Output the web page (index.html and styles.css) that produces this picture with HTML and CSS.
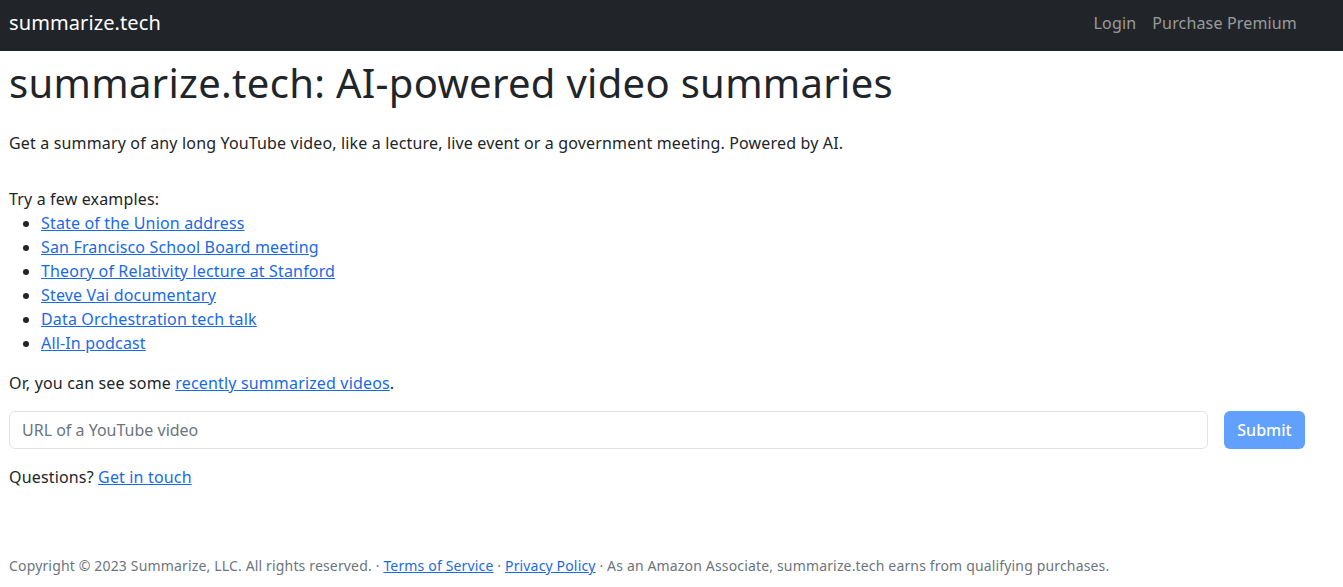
FILE: index.html
```html
<!DOCTYPE html>
<html lang="en">
  <head>
    <meta charset="UTF-8" />
    <meta name="viewport" content="width=device-width, initial-scale=1.0" />
    <title>summarize.tech: AI-powered video summaries</title>
    <link rel="stylesheet" href="styles.css">
  </head>
  <body>
    <nav class="navbar">
      <div class="container navbar-inner">
        <a class="navbar-brand" href="#">summarize.tech</a>
        <div class="navbar-nav">
          <a class="nav-link" href="#">Login</a>
          <a class="nav-link" href="#">Purchase Premium</a>
        </div>
      </div>
    </nav>

    <main class="container">
      <h1>summarize.tech: AI-powered video summaries</h1>
      <p class="intro">
        Get a summary of any long YouTube video, like a lecture, live event or a government meeting. Powered by AI.
      </p>

      <div class="examples">
        Try a few examples:
        <ul>
          <li><a href="#">State of the Union address</a></li>
          <li><a href="#">San Francisco School Board meeting</a></li>
          <li><a href="#">Theory of Relativity lecture at Stanford</a></li>
          <li><a href="#">Steve Vai documentary</a></li>
          <li><a href="#">Data Orchestration tech talk</a></li>
          <li><a href="#">All-In podcast</a></li>
        </ul>
      </div>
      <p class="recent">Or, you can see some <a href="#">recently summarized videos</a>.</p>

      <form class="url-form" onsubmit="return false">
        <input class="form-control" type="text" placeholder="URL of a YouTube video" />
        <button class="btn btn-primary" type="submit" disabled>Submit</button>
      </form>

      <p class="questions">Questions? <a href="#">Get in touch</a></p>

      <footer class="footer">
        Copyright © 2023 Summarize, LLC. All rights reserved. ·
        <a href="#">Terms of Service</a> ·
        <a href="#">Privacy Policy</a> ·
        As an Amazon Associate, summarize.tech earns from qualifying purchases.
      </footer>
    </main>
  </body>
</html>
```
FILE: styles.css
```css
* {
  box-sizing: border-box;
}

body {
  margin: 0;
  font-family: "Noto Sans", "Open Sans", sans-serif;
  font-size: 16px;
  line-height: 1.5;
  letter-spacing: 0.01em;
  color: #212529;
  background: #fff;
}

a {
  color: #1a6ae6;
  text-decoration: underline;
}

.container {
  padding: 0 38px 0 9px;
}

/* navbar */
.navbar {
  background: #212529;
  height: 51px;
}
.navbar-inner {
  display: flex;
  align-items: center;
  justify-content: space-between;
  height: 100%;
}
.navbar-brand {
  color: #fff;
  font-size: 20px;
  text-decoration: none;
  line-height: 1;
  letter-spacing: 0.005em;
  margin-top: -5px;
}
.navbar-nav {
  display: flex;
  margin-top: -5px;
}
.nav-link {
  color: rgba(255, 255, 255, 0.55);
  text-decoration: none;
  padding: 0 8px;
}
.nav-link:last-child {
  padding-right: 0;
  margin-right: 8px;
}

/* content */
h1 {
  font-size: 40px;
  font-weight: 400;
  line-height: 1.2;
  letter-spacing: 0.0075em;
  margin: 8px 0 24px;
}

p {
  margin: 0;
}
.intro {
  margin-bottom: 32px;
}

.examples ul {
  margin: 0 0 16px;
  padding-left: 32px;
}

.recent {
  margin-bottom: 16px;
}

.url-form {
  display: flex;
  gap: 16px;
}
.form-control {
  flex: 1;
  height: 38px;
  padding: 6px 12px;
  font: inherit;
  color: #212529;
  border: 1px solid #dee2e6;
  border-radius: 6px;
  outline: none;
}
.form-control::placeholder {
  color: #6c757d;
}

.btn {
  width: 81px;
  height: 38px;
  font: inherit;
  font-weight: 500;
  border: none;
  border-radius: 6px;
  cursor: pointer;
}
.btn-primary {
  color: #fff;
  background: #0d6efd;
}
.btn-primary:disabled {
  opacity: 0.65;
  cursor: default;
}

.questions {
  margin-top: 16px;
}

.footer {
  margin-top: 66px;
  font-size: 14px;
  color: #6c757d;
}
```
